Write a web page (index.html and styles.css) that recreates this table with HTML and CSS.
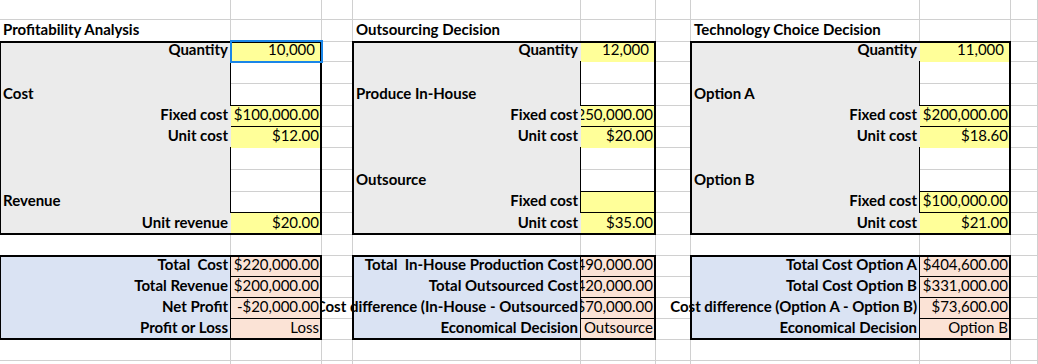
FILE: index.html
```html
<!DOCTYPE html>
<html lang="en">
<head>
<meta charset="utf-8">
<title>Decision Analysis</title>
<link rel="stylesheet" href="styles.css">
</head>
<body>
<div class="sheet">
  <!-- gridlines -->
  <div class="vl x1"></div><div class="vl x2"></div><div class="vl x3"></div>
  <div class="vl x4"></div><div class="vl x5"></div><div class="vl x6"></div>
  <div class="vl x7"></div><div class="vl x8"></div><div class="vl x9"></div>
  <div class="hl y1"></div><div class="hl y2"></div><div class="hl y3"></div>
  <div class="hl y4"></div><div class="hl y5"></div><div class="hl y6"></div>
  <div class="hl y7"></div><div class="hl y8"></div><div class="hl y9"></div>
  <div class="hl y10"></div><div class="hl y11"></div><div class="hl y12"></div>
  <div class="hl y13"></div><div class="hl y14"></div><div class="hl y15"></div>
  <div class="hl y16"></div><div class="hl y17"></div>

  <!-- fills -->
  <div class="fill gray a-left"></div>
  <div class="fill gray a-mid"></div>
  <div class="fill gray a-right"></div>
  <div class="fill blue s-left"></div>
  <div class="fill blue s-mid"></div>
  <div class="fill blue s-right"></div>

  <!-- white input boxes -->
  <div class="wbox x2 rows4-5"></div>
  <div class="wbox x2 rows8-10"></div>
  <div class="wbox x5 rows4-5"></div>
  <div class="wbox x5 rows8-9"></div>
  <div class="wbox x8 rows4-5"></div>
  <div class="wbox x8 rows8-9"></div>

  <!-- titles -->
  <div class="cell b y2 x1">Profitability Analysis</div>
  <div class="cell b y2 x4">Outsourcing Decision</div>
  <div class="cell b y2 x7">Technology Choice Decision</div>

  <!-- Profitability Analysis -->
  <div class="cell b r y3 x1">Quantity</div>
  <div class="cell yel r qty y3 x2">10,000</div>
  <div class="cell b y5 x1">Cost</div>
  <div class="cell b r y6 x1">Fixed cost</div>
  <div class="cell yel bb r y6 x2">$100,000.00</div>
  <div class="cell b r y7 x1">Unit cost</div>
  <div class="cell yel r y7 x2">$12.00</div>
  <div class="cell b y10 x1">Revenue</div>
  <div class="cell b r y11 x1">Unit revenue</div>
  <div class="cell yel r y11 x2">$20.00</div>

  <!-- Outsourcing Decision -->
  <div class="cell b r y3 x4">Quantity</div>
  <div class="cell yel r qty y3 x5">12,000</div>
  <div class="cell b y5 x4">Produce In-House</div>
  <div class="cell b r y6 x4">Fixed cost</div>
  <div class="cell yel bb r clip y6 x5">$250,000.00</div>
  <div class="cell b r y7 x4">Unit cost</div>
  <div class="cell yel r y7 x5">$20.00</div>
  <div class="cell b y9 x4">Outsource</div>
  <div class="cell b r y10 x4">Fixed cost</div>
  <div class="cell yel boxed r y10 x5"></div>
  <div class="cell b r y11 x4">Unit cost</div>
  <div class="cell yel r y11 x5">$35.00</div>

  <!-- Technology Choice Decision -->
  <div class="cell b r y3 x7">Quantity</div>
  <div class="cell yel r qty y3 x8">11,000</div>
  <div class="cell b y5 x7">Option A</div>
  <div class="cell b r y6 x7">Fixed cost</div>
  <div class="cell yel bb r y6 x8">$200,000.00</div>
  <div class="cell b r y7 x7">Unit cost</div>
  <div class="cell yel r y7 x8">$18.60</div>
  <div class="cell b y9 x7">Option B</div>
  <div class="cell b r y10 x7">Fixed cost</div>
  <div class="cell yel boxed r y10 x8">$100,000.00</div>
  <div class="cell b r y11 x7">Unit cost</div>
  <div class="cell yel r y11 x8">$21.00</div>

  <!-- Summary: profitability -->
  <div class="cell b r y13 x1">Total  Cost</div>
  <div class="cell peach r y13 x2">$220,000.00</div>
  <div class="cell b r y14 x1">Total Revenue</div>
  <div class="cell peach r y14 x2">$200,000.00</div>
  <div class="cell b r y15 x1">Net Profit</div>
  <div class="cell peach r y15 x2">-$20,000.00</div>
  <div class="cell b r y16 x1">Profit or Loss</div>
  <div class="cell peach r y16 x2">Loss</div>

  <!-- Summary: outsourcing -->
  <div class="cell b r y13 x4">Total  In-House Production Cost</div>
  <div class="cell peach r clip y13 x5">$490,000.00</div>
  <div class="cell b r y14 x4">Total Outsourced Cost</div>
  <div class="cell peach r clip y14 x5">$420,000.00</div>
  <div class="cell b r clip y15 span-cd">Cost difference (In-House - Outsourced</div>
  <div class="cell peach r clip y15 x5">$70,000.00</div>
  <div class="cell b r y16 x4">Economical Decision</div>
  <div class="cell peach r y16 x5">Outsource</div>

  <!-- Summary: technology -->
  <div class="cell b r y13 x7">Total Cost Option A</div>
  <div class="cell peach r y13 x8">$404,600.00</div>
  <div class="cell b r y14 x7">Total Cost Option B</div>
  <div class="cell peach r y14 x8">$331,000.00</div>
  <div class="cell b r y15 span-fg">Cost difference (Option A - Option B)</div>
  <div class="cell peach r y15 x8">$73,600.00</div>
  <div class="cell b r y16 x7">Economical Decision</div>
  <div class="cell peach r y16 x8">Option B</div>

  <!-- thick frames -->
  <div class="frame f-left"></div>
  <div class="frame f-mid"></div>
  <div class="frame f-right"></div>
  <div class="frame s-left"></div>
  <div class="frame s-mid"></div>
  <div class="frame s-right"></div>

  <!-- cell cursor -->
  <div class="cursor x2 y3"></div>
</div>
</body>
</html>
```

FILE: styles.css
```css
* { box-sizing: border-box; }

html, body {
  margin: 0;
  padding: 0;
  background: #ffffff;
}

body {
  font-family: Lato, "Carlito", "Noto Sans", sans-serif;
  font-size: 15px;
  color: #000;
  overflow: hidden;
}

.sheet {
  display: grid;
  width: 1038px;
  height: 364px;
  grid-template-columns: 231px 91px 31px 228px 75px 35px 229px 91px 1fr;
  grid-template-rows: 20px 22px 20px 22px 22px 21px 21px 22px 22px 21px 22px 21px 21px 21px 21px 21px 21px 1fr;
  overflow: hidden;
}

/* placement helpers */
.x1 { grid-column: 1; }
.x2 { grid-column: 2; }
.x3 { grid-column: 3; }
.x4 { grid-column: 4; }
.x5 { grid-column: 5; }
.x6 { grid-column: 6; }
.x7 { grid-column: 7; }
.x8 { grid-column: 8; }
.x9 { grid-column: 9; }
.y1 { grid-row: 1; }
.y2 { grid-row: 2; }
.y3 { grid-row: 3; }
.y4 { grid-row: 4; }
.y5 { grid-row: 5; }
.y6 { grid-row: 6; }
.y7 { grid-row: 7; }
.y8 { grid-row: 8; }
.y9 { grid-row: 9; }
.y10 { grid-row: 10; }
.y11 { grid-row: 11; }
.y12 { grid-row: 12; }
.y13 { grid-row: 13; }
.y14 { grid-row: 14; }
.y15 { grid-row: 15; }
.y16 { grid-row: 16; }
.y17 { grid-row: 17; }
.span-cd { grid-column: 3 / 5; }
.span-fg { grid-column: 6 / 8; }

/* gridlines */
.vl {
  grid-row: 1 / -1;
  border-right: 1px solid #d0d0d0;
}
.hl {
  grid-column: 1 / -1;
  border-bottom: 1px solid #d0d0d0;
}

/* fills */
.fill.gray { background: #ebebeb; }
.fill.blue { background: #dae3f3; }
.a-left  { grid-area: 3 / 1 / 12 / 2; }
.a-mid   { grid-area: 3 / 4 / 12 / 5; }
.a-right { grid-area: 3 / 7 / 12 / 8; }
.fill.s-left  { grid-area: 13 / 1 / 17 / 2; }
.fill.s-mid   { grid-area: 13 / 4 / 17 / 5; }
.fill.s-right { grid-area: 13 / 7 / 17 / 8; }

/* white input boxes (no fill, thin black outline) */
.wbox {
  margin: -1px 0 0 -1px;
  border: 1px solid #000;
}
.rows4-5  { grid-row: 4 / 6; }
.rows8-9  { grid-row: 8 / 10; }
.rows8-10 { grid-row: 8 / 11; }

/* cells */
.cell {
  display: flex;
  align-items: flex-end;
  justify-content: flex-start;
  padding: 0 3px 5px 3px;
  line-height: 15px;
  white-space: pre;
  min-width: 0;
}
.cell.r { justify-content: flex-end; }
.cell.b { font-weight: 700; }
.cell.qty { padding-right: 7px; }
.cell.clip { overflow: hidden; }

.cell.yel { background: #ffff99; }
.cell.bb { border-bottom: 1px solid #000; padding-bottom: 4px; }
.cell.boxed {
  margin: -1px 0 0 -1px;
  border: 1px solid #000;
  padding: 0 2px 4px 2px;
}
.cell.peach {
  background: #fbe3d6;
  margin: -1px 0 0 -1px;
  border: 1px solid #000;
  padding: 0 2px 4px 2px;
}
.span-cd, .span-fg { padding-left: 0; }

/* thick block frames */
.frame {
  margin: -1px 0 0 -1px;
  border: 2px solid #000;
}
.f-left  { grid-area: 3 / 1 / 12 / 3; }
.f-mid   { grid-area: 3 / 4 / 12 / 6; }
.f-right { grid-area: 3 / 7 / 12 / 9; }
.frame.s-left  { grid-area: 13 / 1 / 17 / 3; }
.frame.s-mid   { grid-area: 13 / 4 / 17 / 6; }
.frame.s-right { grid-area: 13 / 7 / 17 / 9; }

/* cell cursor */
.cursor {
  margin: -2px -1px -1px -1px;
  border: 2px solid #1a86e8;
}
```
